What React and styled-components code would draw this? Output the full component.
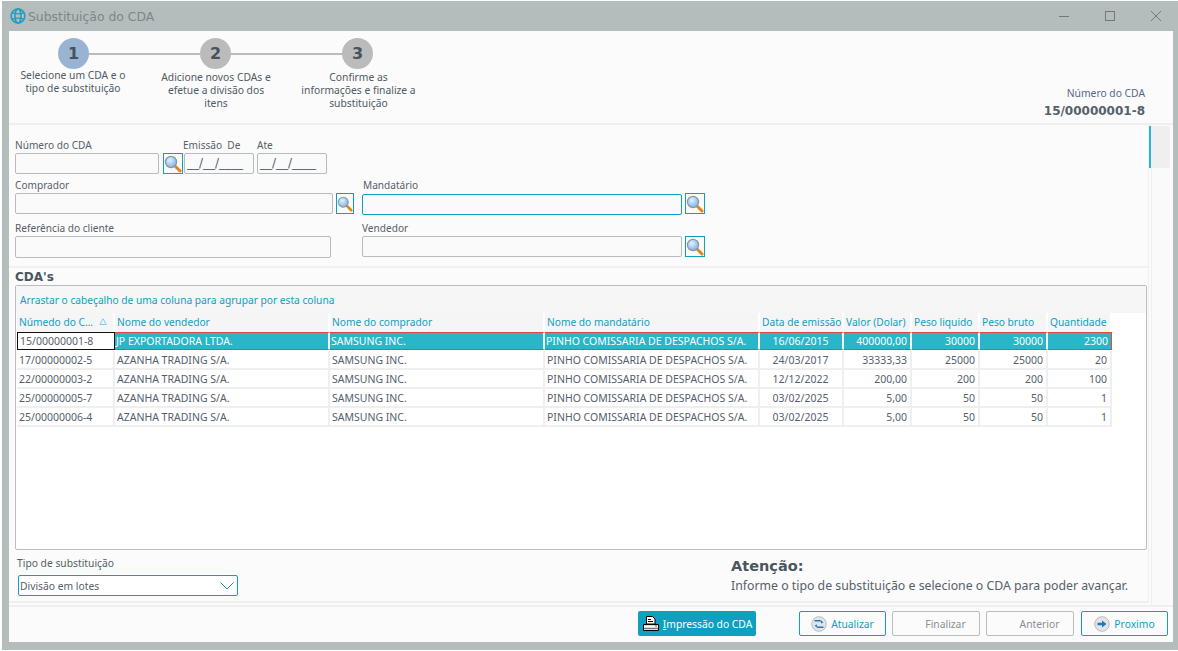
import styled, { createGlobalStyle } from 'styled-components';

const FONT = '"Noto Sans", "DejaVu Sans", sans-serif';
const BOLD_FONT = '"DejaVu Sans", Verdana, sans-serif';
const TEAL = '#0f9fc0';
const COLUMNS = '98px 215px 215px 215px 84px 68px 68px 68px 64px';

const GlobalStyle = createGlobalStyle`
  html, body {
    margin: 0;
    padding: 0;
    background: #ffffff;
  }
  * {
    box-sizing: border-box;
  }
`;

const Page = styled.div`
  width: 1178px;
  height: 651px;
  padding: 1px 0 1px 2px;
  font-family: ${FONT};
  font-size: 10.3px;
  color: #56606a;
  overflow: hidden;
`;

const Window = styled.div`
  height: 649px;
  display: flex;
  flex-direction: column;
  background: #b4bcbc;
  padding: 0 5px 8px 7px;
`;

const TitleBar = styled.div`
  height: 30px;
  flex: none;
  display: flex;
  align-items: center;
  margin-left: -7px;
  padding-left: 8px;
`;

const TitleText = styled.span`
  font-family: ${BOLD_FONT};
  font-size: 12.4px;
  color: #7f8688;
  margin-left: 2px;
`;

const WindowControls = styled.div`
  margin-left: auto;
  display: flex;
  align-items: center;
  gap: 34px;
  padding-right: 11px;
`;

const Body = styled.div`
  flex: 1;
  display: flex;
  flex-direction: column;
  background: #fbfbfb;
  min-height: 0;
`;

const WizardHead = styled.div`
  height: 94px;
  flex: none;
  position: relative;
  border-bottom: 2px solid #efefef;
  padding-top: 7px;
`;

const StepTrack = styled.div`
  display: flex;
  align-items: center;
  padding-left: 49px;
`;

const Circle = styled.div`
  width: 31px;
  height: 31px;
  border-radius: 50%;
  background: ${(p) => (p.$active ? '#98b4d2' : '#bbbbbb')};
  color: #47525c;
  font-family: ${BOLD_FONT};
  font-size: 16px;
  font-weight: 700;
  display: flex;
  align-items: center;
  justify-content: center;
`;

const Connector = styled.div`
  width: 111px;
  height: 2px;
  background: #bbbbbb;
`;

const StepLabels = styled.div`
  display: grid;
  grid-template-columns: 128px 156px 128px;
`;

const StepLabel = styled.div`
  text-align: center;
  line-height: 13px;
  color: #4f5a64;
  white-space: nowrap;
  padding-top: ${(p) => (p.$first ? 0 : 2)}px;
  margin-left: ${(p) => p.$shift || 0}px;
`;

const CdaSummary = styled.div`
  position: absolute;
  right: 28px;
  top: 55px;
  text-align: right;
`;

const CdaCaption = styled.div`
  color: #56688a;
  line-height: 14px;
`;

const CdaValue = styled.div`
  font-family: ${BOLD_FONT};
  font-size: 12px;
  font-weight: 700;
  color: #56606a;
  margin-top: 4px;
`;

const FormArea = styled.div`
  flex: none;
  height: 482px;
  display: flex;
  min-height: 0;
  border-bottom: 2px solid #efefef;
`;

const FormMain = styled.div`
  width: 1140px;
  height: 478px;
  flex: none;
  border-right: 1px solid #efefef;
  border-bottom: 2px solid #efefef;
  display: flex;
  flex-direction: column;
`;

const FieldRow = styled.div`
  display: flex;
  height: ${(p) => p.$h}px;
  padding-left: 6px;
`;

const Field = styled.div`
  display: flex;
  flex-direction: column;
  width: ${(p) => p.$w}px;
  margin-right: ${(p) => p.$mr || 0}px;
`;

const FieldLabel = styled.label`
  height: 13px;
  font-size: 10.1px;
  line-height: 13px;
  margin-top: ${(p) => p.$top ?? 14}px;
  margin-bottom: 1px;
  margin-left: ${(p) => p.$nudge || 0}px;
  white-space: pre;
`;

const InputLine = styled.div`
  display: flex;
  gap: ${(p) => p.$gap ?? 3}px;
`;

const TextBox = styled.div`
  flex: ${(p) => (p.$w ? 'none' : '1')};
  width: ${(p) => (p.$w ? `${p.$w}px` : 'auto')};
  height: 21px;
  margin-top: ${(p) => (p.$focus ? 1 : 0)}px;
  border: 1px solid ${(p) => (p.$focus ? '#0f9fc0' : '#b6bcbc')};
  border-radius: 2px;
  background: #fafafa;
`;

const DateMask = styled.span`
  display: block;
  padding-left: 2px;
  font-family: ${BOLD_FONT};
  font-size: 12px;
  line-height: 19px;
  color: #56606a;
`;

const SearchBtn = styled.button`
  flex: none;
  width: ${(p) => p.$w || 20}px;
  height: 21px;
  padding: 0;
  border: 1px solid ${TEAL};
  background: #fbfbfb;
  display: flex;
  align-items: center;
  justify-content: center;
`;

const Divider = styled.div`
  height: 2px;
  background: #f1f1f1;
  margin-top: 8px;
`;

const SectionTitle = styled.div`
  font-family: ${BOLD_FONT};
  font-size: 12px;
  font-weight: 700;
  color: #4a5660;
  padding: 2px 0 0 6px;
  height: 17px;
`;

const GridBox = styled.div`
  margin-left: 6px;
  width: 1132px;
  height: 265px;
  flex: none;
  border: 1px solid #b8bebe;
  border-radius: 2px;
  background: #fff;
  display: flex;
  flex-direction: column;
`;

const GroupBar = styled.div`
  height: 27px;
  flex: none;
  background: #f6f6f6;
  color: ${TEAL};
  font-size: 10.2px;
  padding: 8px 0 0 4px;
  line-height: 13px;
`;

const GridRow = styled.div`
  display: grid;
  grid-template-columns: ${COLUMNS};
  height: 19px;
  flex: none;
  padding-left: 1px;
  background: #fff;
  font-size: 10.5px;
`;

const HeaderCell = styled.div`
  background: #f5f5f5;
  color: ${TEAL};
  border-right: 2px solid #fff;
  font-size: 10.2px;
  line-height: 18px;
  padding-left: 2px;
  white-space: nowrap;
  overflow: hidden;
  position: relative;
`;

const SortMark = styled.svg`
  position: absolute;
  right: 6px;
  top: 5px;
`;

const Cell = styled.div`
  line-height: 18px;
  padding: 0 3px 0 2px;
  white-space: nowrap;
  overflow: hidden;
  text-align: ${(p) => p.$align || 'left'};
  border-right: 2px solid #efefef;
  border-bottom: 2px solid #efefef;
  color: #56606a;
  background: #fff;
`;

const SelectedCell = styled(Cell)`
  height: 18px;
  line-height: 16px;
  padding-left: ${(p) => (p.$align === 'left' ? 1 : 2)}px;
  background: #28b6c8;
  color: #fff;
  border-top: 1px solid #e9473c;
  border-bottom: 1px solid #e9473c;
  border-right: ${(p) => (p.$last ? '1px solid #e9473c' : '2px solid #fff')};
`;

const FocusedCell = styled(Cell)`
  height: 18px;
  line-height: 16px;
  border: 1px solid #111;
  padding-left: 2px;
`;

const BottomRow = styled.div`
  flex: 1;
  display: flex;
  justify-content: space-between;
  padding: 7px 0 0 8px;
`;

const TypeField = styled.div`
  width: 221px;
`;

const TypeLabel = styled.div`
  line-height: 13px;
  margin-bottom: 5px;
`;

const TypeSelect = styled.div`
  height: 21px;
  margin-left: 1px;
  border: 1px solid ${TEAL};
  border-radius: 2px;
  background: #fff;
  display: flex;
  align-items: center;
  justify-content: space-between;
  padding: 0 3px 0 1px;
`;

const Notice = styled.div`
  width: 417px;
  padding-top: 1px;
`;

const NoticeTitle = styled.div`
  font-family: ${BOLD_FONT};
  font-size: 14.5px;
  font-weight: 700;
  color: #4a5660;
  line-height: 17px;
`;

const NoticeText = styled.div`
  margin-top: 4px;
  font-size: 12.3px;
  line-height: 14px;
  white-space: nowrap;
`;

const ScrollColumn = styled.div`
  flex: 1;
  padding-top: 1px;
  position: relative;
`;

const ScrollThumb = styled.div`
  position: relative;
  width: 2px;
  height: 42px;
  background: #28b6c8;
`;

const ScrollGutter = styled.div`
  position: absolute;
  top: 0;
  bottom: 0;
  left: 2px;
  width: 19px;
  border-left: 1px solid #efefef;
  background: #fafafa;
`;

const ScrollTrack = styled.div`
  position: absolute;
  top: 1px;
  left: 2px;
  width: 19px;
  height: 42px;
  border-radius: 2px;
  background: #efefef;
`;

const Footer = styled.div`
  flex: 1;
  display: flex;
  align-items: flex-start;
  gap: 6px;
  padding: 4px 0 0 629px;
`;

const PrintButton = styled.button`
  width: 118px;
  height: 25px;
  margin-right: 37px;
  border: 0;
  border-radius: 2px;
  background: ${TEAL};
  color: #fff;
  font: inherit;
  display: flex;
  align-items: center;
  justify-content: center;
  gap: 3px;
  padding: 0;
  white-space: nowrap;
`;

const NavButton = styled.button`
  width: ${(p) => p.$w}px;
  height: 25px;
  margin-left: ${(p) => p.$ml || 0}px;
  border: 1px solid ${(p) => (p.$on ? TEAL : '#b8bebe')};
  border-radius: 2px;
  background: #fbfbfb;
  color: ${(p) => (p.$on ? TEAL : '#8b9094')};
  font: inherit;
  display: flex;
  align-items: center;
  justify-content: center;
  gap: 4px;
  padding: 0 0 0 ${(p) => (p.$on ? 0 : 19)}px;
`;

const Globe = () => (
  <svg width="16" height="16" viewBox="0 0 16 16" fill="none" stroke="#1c9dc4" strokeWidth="1.5">
    <circle cx="8" cy="8" r="6.9" />
    <ellipse cx="8" cy="8" rx="3.1" ry="6.9" />
    <path d="M2.2 4.8c3.5 1.3 8.100 1.300 11.600 0M2.200 11.200c3.500-1.300 8.100-1.300 11.600 0" strokeWidth="1.300" />
  </svg>
);

const Magnifier = () => (
  <svg width="18" height="18" viewBox="0 0 18 18">
    <defs>
      <radialGradient id="lens" cx="0.4" cy="0.35" r="0.7">
        <stop offset="0" stopColor="#e2f1ff" />
        <stop offset="1" stopColor="#78aee6" />
      </radialGradient>
    </defs>
    <path d="M10.500 10.500L16 16" stroke="#e08a14" strokeWidth="3" strokeLinecap="round" />
    <circle cx="7" cy="7" r="5.600" fill="url(#lens)" stroke="#8c979e" strokeWidth="1.200" />
  </svg>
);

const Printer = () => (
  <svg width="18" height="18" viewBox="0 0 18 18">
    <path d="M4.500 1.500h6l2.500 2.500v5h-8.500z" fill="#fff" stroke="#000" />
    <path d="M6 4.500h3M6 6.500h5" stroke="#000" />
    <path d="M1.500 9.500h15v6h-15z" fill="#d9d9d9" stroke="#000" />
    <path d="M2 11.500h14" stroke="#fff" />
    <path d="M2 13.500h14" stroke="#777" />
    <rect x="13" y="10.500" width="2" height="1" fill="#e03030" />
  </svg>
);

const RoundIcon = ({ children }) => (
  <svg width="16" height="16" viewBox="0 0 16 16">
    <circle cx="8" cy="8" r="7.300" fill="#e4e4e4" stroke="#bcbcbc" />
    {children}
  </svg>
);

const RefreshIcon = () => (
  <RoundIcon>
    <path d="M3.500 5.500H10v2l2.500-1-3-2.500h-6z" fill="#1e78c8" />
    <path d="M12.500 10.500H6v-2l-2.500 1 3 2.500h6z" fill="#1e78c8" />
  </RoundIcon>
);

const ArrowIcon = () => (
  <RoundIcon>
    <path d="M3.500 6.800H8V4.500L12.500 8 8 11.500V9.200H3.500z" fill="#1e78c8" />
  </RoundIcon>
);

const Chevron = () => (
  <svg width="14" height="8" viewBox="0 0 14 8" fill="none" stroke="#1590ad" strokeWidth="1">
    <path d="M0.500 0.500L7 7l6.500-6.500" />
  </svg>
);

const MinIcon = () => (
  <svg width="12" height="12" viewBox="0 0 12 12"><path d="M1 6.500h10" stroke="#777" /></svg>
);
const MaxIcon = () => (
  <svg width="12" height="12" viewBox="0 0 12 12" fill="none"><rect x="1.500" y="1.500" width="9" height="9" stroke="#777" /></svg>
);
const CloseIcon = () => (
  <svg width="12" height="12" viewBox="0 0 12 12"><path d="M1 1l10 10M11 1L1 11" stroke="#777" /></svg>
);

const headers = [
  'Númedo do C...',
  'Nome do vendedor',
  'Nome do comprador',
  'Nome do mandatário',
  'Data de emissão',
  'Valor (Dolar)',
  'Peso liquido',
  'Peso bruto',
  'Quantidade',
];

const MANDATARIO = 'PINHO COMISSARIA DE DESPACHOS S/A.';
const rows = [
  ['15/00000001-8', 'JP EXPORTADORA LTDA.', 'SAMSUNG INC.', MANDATARIO, '16/06/2015', '400000,00', '30000', '30000', '2300'],
  ['17/00000002-5', 'AZANHA TRADING S/A.', 'SAMSUNG INC.', MANDATARIO, '24/03/2017', '33333,33', '25000', '25000', '20'],
  ['22/00000003-2', 'AZANHA TRADING S/A.', 'SAMSUNG INC.', MANDATARIO, '12/12/2022', '200,00', '200', '200', '100'],
  ['25/00000005-7', 'AZANHA TRADING S/A.', 'SAMSUNG INC.', MANDATARIO, '03/02/2025', '5,00', '50', '50', '1'],
  ['25/00000006-4', 'AZANHA TRADING S/A.', 'SAMSUNG INC.', MANDATARIO, '03/02/2025', '5,00', '50', '50', '1'],
];

const alignFor = (i) => (i === 4 ? 'center' : i > 4 ? 'right' : 'left');

const cellFor = (r, i) => {
  if (r !== 0) return Cell;
  return i === 0 ? FocusedCell : SelectedCell;
};

export default function App() {
  return (
    <Page>
      <GlobalStyle />
      <Window>
        <TitleBar>
          <Globe />
          <TitleText>Substituição do CDA</TitleText>
          <WindowControls>
            <MinIcon />
            <MaxIcon />
            <CloseIcon />
          </WindowControls>
        </TitleBar>
        <Body>
          <WizardHead>
            <StepTrack>
              <Circle $active>1</Circle>
              <Connector />
              <Circle>2</Circle>
              <Connector />
              <Circle>3</Circle>
            </StepTrack>
            <StepLabels>
              <StepLabel $first>Selecione um CDA e o<br />tipo de substituição</StepLabel>
              <StepLabel $shift={2}>Adicione novos CDAs e<br />efetue a divisão dos<br />itens</StepLabel>
              <StepLabel $shift={3}>Confirme as<br />informações e finalize a<br />substituição</StepLabel>
            </StepLabels>
            <CdaSummary>
              <CdaCaption>Número do CDA</CdaCaption>
              <CdaValue>15/00000001-8</CdaValue>
            </CdaSummary>
          </WizardHead>
          <FormArea>
            <FormMain>
              <FieldRow $h={50}>
                <Field $w={168} $mr={1}>
                  <FieldLabel>Número do CDA</FieldLabel>
                  <InputLine $gap={4}>
                    <TextBox />
                    <SearchBtn><Magnifier /></SearchBtn>
                  </InputLine>
                </Field>
                <Field $w={73}>
                  <FieldLabel $nudge={-1}>{'Emissão  De'}</FieldLabel>
                  <TextBox $w={70}><DateMask>__/__/____</DateMask></TextBox>
                </Field>
                <Field $w={70}>
                  <FieldLabel>Ate</FieldLabel>
                  <TextBox $w={70}><DateMask>__/__/____</DateMask></TextBox>
                </Field>
              </FieldRow>
              <FieldRow $h={40}>
                <Field $w={339} $mr={8}>
                  <FieldLabel $top={4}>Comprador</FieldLabel>
                  <InputLine>
                    <TextBox />
                    <SearchBtn $w={18}><Magnifier /></SearchBtn>
                  </InputLine>
                </Field>
                <Field $w={343}>
                  <FieldLabel $top={4} $nudge={1}>Mandatário</FieldLabel>
                  <InputLine>
                    <TextBox $focus />
                    <SearchBtn><Magnifier /></SearchBtn>
                  </InputLine>
                </Field>
              </FieldRow>
              <FieldRow $h={43}>
                <Field $w={316} $mr={31}>
                  <FieldLabel $top={7}>Referência do cliente</FieldLabel>
                  <TextBox />
                </Field>
                <Field $w={343}>
                  <FieldLabel $top={7}>Vendedor</FieldLabel>
                  <InputLine>
                    <TextBox />
                    <SearchBtn><Magnifier /></SearchBtn>
                  </InputLine>
                </Field>
              </FieldRow>
              <Divider />
              <SectionTitle>CDA's</SectionTitle>
              <GridBox>
                <GroupBar>Arrastar o cabeçalho de uma coluna para agrupar por esta coluna</GroupBar>
                <GridRow>
                  {headers.map((h, i) => (
                    <HeaderCell key={h}>
                      {h}
                      {i === 0 && (
                        <SortMark width="8" height="7" viewBox="0 0 8 7" fill="none" stroke="#7fd0e4">
                          <path d="M4 0.700L0.700 6.500h6.600z" />
                        </SortMark>
                      )}
                    </HeaderCell>
                  ))}
                </GridRow>
                {rows.map((row, r) => (
                  <GridRow key={row[0]}>
                    {row.map((value, i) => {
                      const RowCell = cellFor(r, i);
                      return (
                        <RowCell key={i} $align={alignFor(i)} $last={i === row.length - 1}>
                          {value}
                        </RowCell>
                      );
                    })}
                  </GridRow>
                ))}
              </GridBox>
              <BottomRow>
                <TypeField>
                  <TypeLabel>Tipo de substituição</TypeLabel>
                  <TypeSelect>
                    Divisão em lotes
                    <Chevron />
                  </TypeSelect>
                </TypeField>
                <Notice>
                  <NoticeTitle>Atenção:</NoticeTitle>
                  <NoticeText>Informe o tipo de substituição e selecione o CDA para poder avançar.</NoticeText>
                </Notice>
              </BottomRow>
            </FormMain>
            <ScrollColumn>
              <ScrollGutter />
              <ScrollTrack />
              <ScrollThumb />
            </ScrollColumn>
          </FormArea>
          <Footer>
            <PrintButton>
              <Printer />
              <span><u>I</u>mpressão do CDA</span>
            </PrintButton>
            <NavButton $w={87} $on>
              <RefreshIcon />
              Atualizar
            </NavButton>
            <NavButton $w={88}>Finalizar</NavButton>
            <NavButton $w={88}>Anterior</NavButton>
            <NavButton $w={87} $on $ml={1}>
              <ArrowIcon />
              Proximo
            </NavButton>
          </Footer>
        </Body>
      </Window>
    </Page>
  );
}
